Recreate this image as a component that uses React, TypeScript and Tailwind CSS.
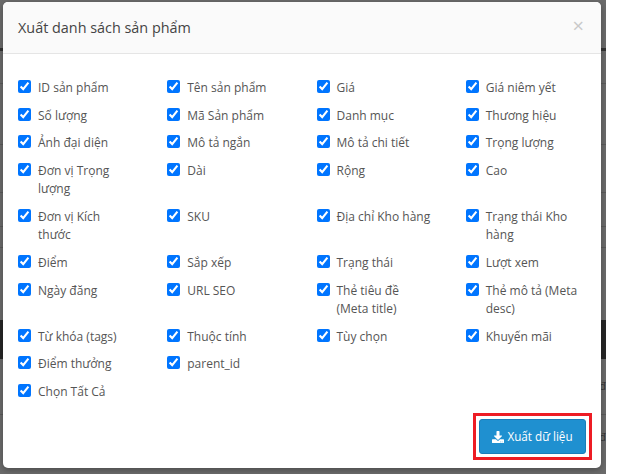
import { FaDownload } from 'react-icons/fa'

const fields = [
  'ID sản phẩm', 'Tên sản phẩm', 'Giá', 'Giá niêm yết',
  'Số lượng', 'Mã Sản phẩm', 'Danh mục', 'Thương hiệu',
  'Ảnh đại diện', 'Mô tả ngắn', 'Mô tả chi tiết', 'Trọng lượng',
  'Đơn vị Trọng lượng', 'Dài', 'Rộng', 'Cao',
  'Đơn vị Kích thước', 'SKU', 'Địa chỉ Kho hàng', 'Trạng thái Kho hàng',
  'Điểm', 'Sắp xếp', 'Trạng thái', 'Lượt xem',
  'Ngày đăng', 'URL SEO', 'Thẻ tiêu đề (Meta title)', 'Thẻ mô tả (Meta desc)',
  'Từ khóa (tags)', 'Thuộc tính', 'Tùy chọn', 'Khuyến mãi',
  'Điểm thưởng', 'parent_id', '', '',
  'Chọn Tất Cả',
]

function Field({ label }: { label: string }) {
  if (!label) return <div />
  return (
    <label className="flex items-start gap-[7px] px-[15px] mb-[9px]">
      <input type="checkbox" defaultChecked className="w-[13px] h-[13px] mt-[1px] shrink-0" />
      <span className="max-w-[96px] text-[12px] leading-[18.57px] text-[#555]">{label}</span>
    </label>
  )
}

function PageBehind() {
  return (
    <div className="flex flex-col w-[606px] h-full bg-[#6b6b6b] overflow-hidden">
      <div className="h-[48px]" />
      <div className="h-[3px] bg-[#333]" />
      <div className="h-[33px] border-b border-[#5a5a5a]" />
      <div className="h-[61px] border-b border-[#5a5a5a]" />
      <div className="h-[48px] border-b border-[#5a5a5a]" />
      <div className="h-[34px] border-b border-[#5a5a5a]" />
      <div className="h-[21px] border-b border-[#5a5a5a]" />
      <div className="h-[72px]" />
      <div className="h-[39px] bg-[#262626]" />
      <div className="flex justify-end items-center h-[56px] border-b border-[#5a5a5a] text-[11px] text-[#333]">đ</div>
      <div className="flex justify-end items-center h-[44px] text-[11px] text-[#333]">đ</div>
      <div className="flex-1" />
    </div>
  )
}

export default function App() {
  return (
    <div className="relative w-full h-[474px] bg-white overflow-hidden font-['Open_Sans',sans-serif]">
      <PageBehind />
      <div className="absolute left-[3px] top-[2px] w-[598px] h-[466px] bg-white rounded-[5px] shadow-[0_2px_6px_rgba(0,0,0,0.3)] overflow-hidden">
        <div className="flex items-center justify-between h-[52px] bg-[#fafafa] border-b border-[#e5e5e5] pl-[15px] pr-[17px]">
          <h4 className="text-[14.4px] font-medium text-[#444]">Xuất danh sách sản phẩm</h4>
          <span className="text-[#c9c9c9] text-[20px] leading-none pb-[4px]">×</span>
        </div>
        <div className="grid grid-cols-4 w-[597px] pt-[25px]">
          {fields.map((f, i) => (
            <Field key={i} label={f} />
          ))}
        </div>
        <div className="flex justify-end pr-[9px] mt-[3px]">
          <div className="border-[3px] border-[#ed1c24] p-[3px]">
            <button className="flex items-center justify-center gap-[3px] w-[107px] h-[35px] rounded-[3px] bg-[#1f90d0] border border-[#1a7db8] text-white text-[11.7px]">
              <FaDownload className="w-[12px] h-[12px]" />
              Xuất dữ liệu
            </button>
          </div>
        </div>
      </div>
    </div>
  )
}
